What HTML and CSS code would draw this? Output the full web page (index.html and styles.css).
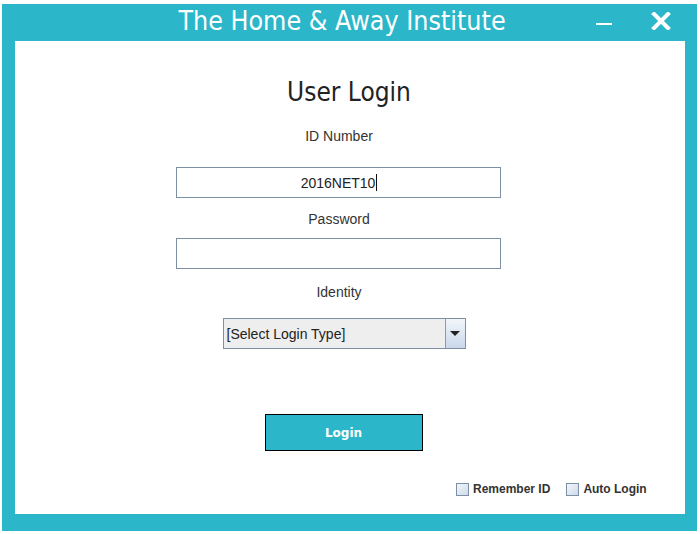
FILE: index.html
```html
<!DOCTYPE html>
<html>
<head>
<meta charset="utf-8">
<link rel="stylesheet" href="styles.css">
</head>
<body>
<div class="frame">
  <div class="titlebar">
    <span class="title">The Home &amp; Away Institute</span>
    <span class="min"></span>
    <svg class="close" width="20" height="18" viewBox="0 0 20 18"><path d="M3 2 L17 16 M17 2 L3 16" stroke="#fff" stroke-width="4" stroke-linecap="square"/></svg>
  </div>
  <div class="content">
    <h1 class="heading">User Login</h1>
    <div class="label lbl-id">ID Number</div>
    <div class="field field-id"><span class="val">2016NET10</span><span class="caret"></span></div>
    <div class="label lbl-pw">Password</div>
    <div class="field field-pw"></div>
    <div class="label lbl-identity">Identity</div>
    <div class="select">
      <span class="sel-text">[Select Login Type]</span>
      <span class="sel-btn"><svg width="10" height="6" viewBox="0 0 10 6"><path d="M0 0 H10 L5 5 Z" fill="#222"/></svg></span>
    </div>
    <div class="login">Login</div>
    <div class="checks">
      <label class="chk"><span class="box"></span>Remember ID</label>
      <label class="chk"><span class="box"></span>Auto Login</label>
    </div>
  </div>
</div>
</body>
</html>
```
FILE: styles.css
```css
html, body { margin: 0; padding: 0; background: #fff; }
body { width: 700px; height: 534px; position: relative; font-family: "Liberation Sans", Arial, sans-serif; }
.frame {
  position: absolute; left: 2px; top: 4px; width: 695px; height: 527px;
  background: #2bb7c9; box-sizing: border-box;
  padding: 0 12px 17px 13px;
  display: flex; flex-direction: column;
}
.titlebar { height: 37px; position: relative; display: flex; align-items: center; justify-content: center; }
.title {
  font-family: "DejaVu Sans Condensed", "DejaVu Sans", sans-serif; font-size: 26.6px; color: #fff;
  margin-left: -16px; margin-top: -4px; letter-spacing: 0px;
}
.min { position: absolute; left: 581px; top: 19px; width: 16px; height: 2px; background: #fff; }
.close { position: absolute; left: 636px; top: 8px; }
.content {
  flex: 1; background: #fff; display: flex; flex-direction: column; align-items: center;
  position: relative; padding-right: 24px;
}
.heading {
  margin: 35px 0 0 22px; font-weight: normal; font-size: 26px; line-height: 32px;
  font-family: "DejaVu Sans Condensed", "DejaVu Sans", sans-serif; color: #222;
}
.label { font-size: 14px; color: #333; line-height: 16px; margin-left: 2px; }
.lbl-id { margin-top: 20px; }
.lbl-pw { margin-top: 13px; }
.lbl-identity { margin-top: 15px; }
.field {
  width: 325px; height: 31px; box-sizing: border-box; border: 1px solid #7d8fa2;
  display: flex; align-items: center; justify-content: center;
  font-size: 14px; color: #222;
}
.field-id { margin-top: 23px; }
.field-pw { margin-top: 11px; }
.val { margin-left: 2px; }
.caret { width: 1px; height: 17px; background: #111; margin-left: 1px; }
.select {
  width: 243px; height: 31px; box-sizing: border-box; border: 1px solid #7d8fa2;
  margin-top: 18px; background: #eeeeee; display: flex; align-items: center; margin-left: 12px;
  font-size: 14px; color: #222;
}
.sel-text { flex: 1; padding-left: 3px; }
.sel-btn {
  width: 19px; height: 29px; border-left: 1px solid #8a9ab0;
  background: linear-gradient(#f2f6fb, #c9d8ea); display: flex; align-items: center; justify-content: center;
}
.login {
  margin-top: 65px; width: 158px; height: 37px; box-sizing: border-box; border: 1px solid #000;
  background: #2bb7c9; color: #fff; font-weight: bold; font-size: 12px;
  font-family: "DejaVu Sans", sans-serif;
  display: flex; align-items: center; justify-content: center; margin-left: 11px;
}
.checks {
  position: absolute; left: 441px; top: 441px; display: flex; gap: 16px;
  font-size: 12px; font-weight: bold; color: #333;
}
.chk { display: flex; align-items: center; gap: 4px; }
.box {
  width: 11px; height: 11px; border: 1px solid #7d8fa2;
  background: linear-gradient(135deg, #f2f5fa, #cfdbe9);
}
```
